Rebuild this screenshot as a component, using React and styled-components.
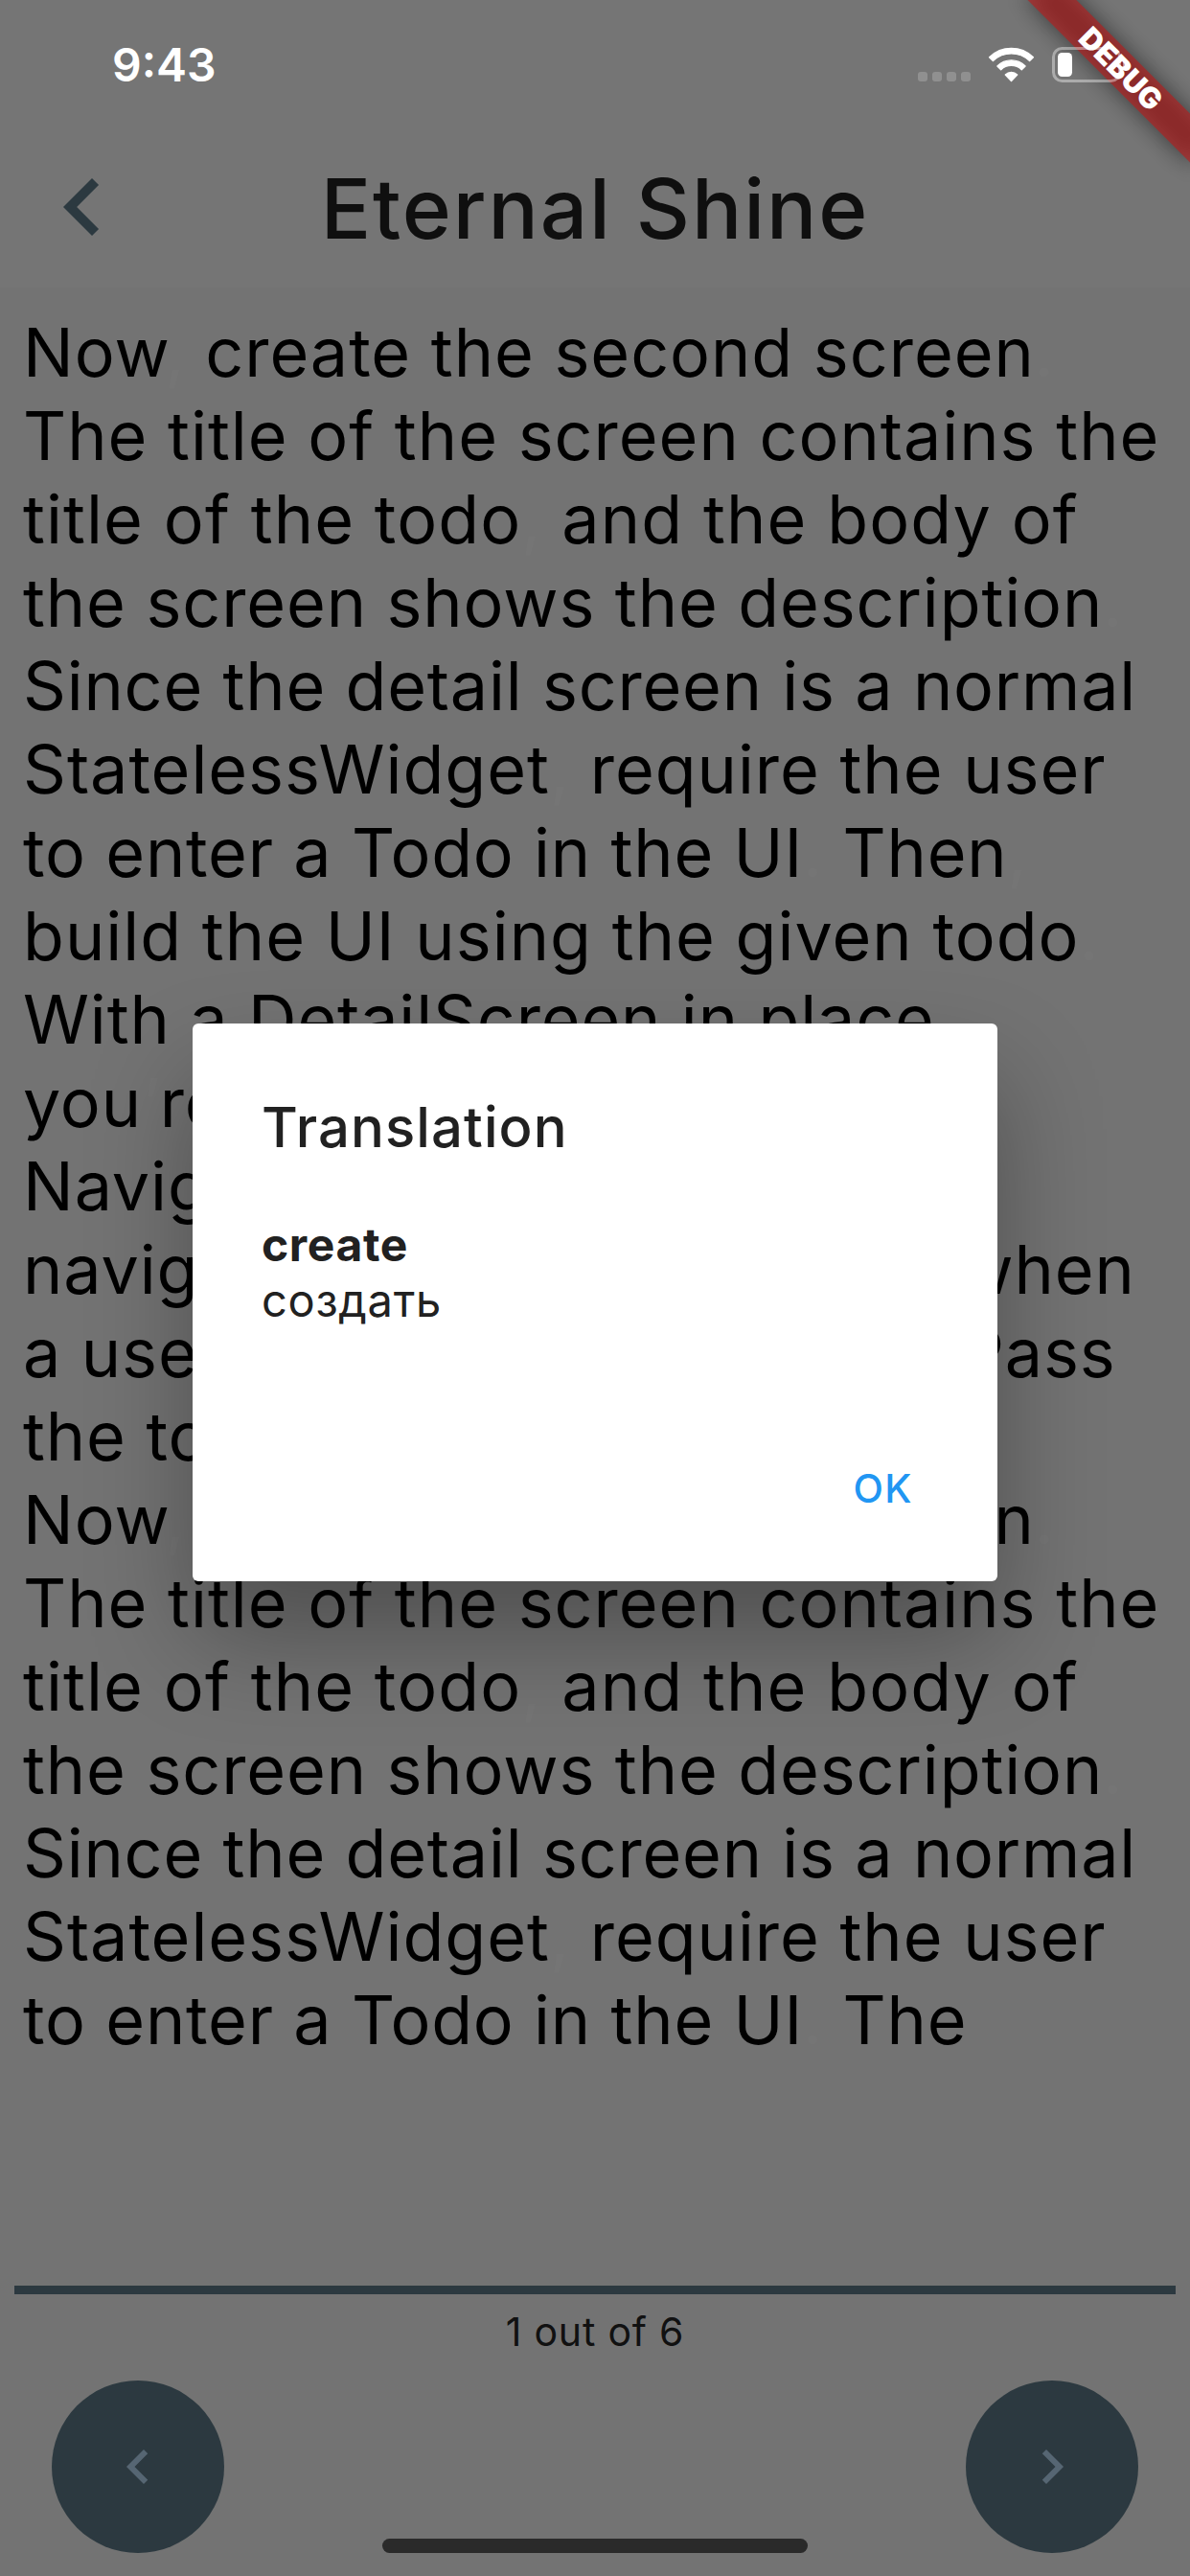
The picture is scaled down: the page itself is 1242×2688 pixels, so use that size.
import React from "react";
import styled, { createGlobalStyle } from "styled-components";

const GlobalStyle = createGlobalStyle`
  *, *::before, *::after {
    box-sizing: border-box;
  }
  html, body {
    margin: 0;
    padding: 0;
    background: #fafafa;
  }
  body {
    font-family: Inter, Roboto, "Liberation Sans", sans-serif;
  }
`;

const Screen = styled.div`
  position: relative;
  width: 1242px;
  height: 2688px;
  overflow: hidden;
  display: flex;
  flex-direction: column;
  background: #fafafa;
`;

/* ---------- app bar ---------- */

const AppBar = styled.header`
  flex: none;
  height: 300px;
  padding-top: 132px;
  display: grid;
  grid-template-columns: 172px 1fr 172px;
  align-items: center;
  background: #ffffff;
`;

const BackButton = styled.button`
  display: flex;
  align-items: center;
  margin: 0;
  padding: 0 0 0 26px;
  border: 0;
  background: none;
`;

const PageTitle = styled.h1`
  margin: 0;
  padding-top: 3px;
  font-size: 87px;
  line-height: 108px;
  font-weight: 500;
  letter-spacing: 1.9px;
  text-align: center;
  white-space: nowrap;
  color: rgba(0, 0, 0, 0.87);
`;

/* ---------- reading area ---------- */

const Reader = styled.main`
  flex: 1;
  min-height: 0;
  padding: 24px 0 0 24px;
`;

const Line = styled.p`
  margin: 0;
  font-size: 70px;
  line-height: 87px;
  letter-spacing: ${(p) => p.$tracking}px;
  white-space: pre;
  color: #000000;
`;

const Mark = styled.span`
  color: #ffffff;
`;

/* ---------- pager ---------- */

const Pager = styled.footer`
  flex: none;
  display: flex;
  flex-direction: column;
  padding: 0 15px 24px;
`;

const Rule = styled.div`
  height: 9px;
  background: #607d8b;
`;

const PageCount = styled.div`
  margin: 15px 0 27px;
  font-size: 41px;
  line-height: 48px;
  letter-spacing: 0.8px;
  text-align: center;
  color: rgba(0, 0, 0, 0.87);
`;

const PagerButtons = styled.div`
  display: flex;
  justify-content: space-between;
  padding: 0 39px;
`;

const RoundButton = styled.button`
  width: 180px;
  height: 180px;
  padding: 0;
  border: 0;
  border-radius: 50%;
  display: flex;
  align-items: center;
  justify-content: center;
  background: #607d8b;
`;

/* ---------- dialog ---------- */

const Barrier = styled.div`
  position: absolute;
  inset: 0;
  padding-top: 30px;
  display: flex;
  align-items: center;
  justify-content: center;
  background: rgba(0, 0, 0, 0.54);
`;

const Dialog = styled.section`
  width: 840px;
  height: 582px;
  padding: 72px 72px 43px;
  display: flex;
  flex-direction: column;
  border-radius: 6px;
  background: #ffffff;
  color: #212121;
  box-shadow: 0 58px 110px rgba(0, 0, 0, 0.31);
`;

const DialogTitle = styled.h2`
  margin: 0 0 58px;
  font-size: 58px;
  line-height: 72px;
  font-weight: 500;
  letter-spacing: 1.1px;
`;

const Entry = styled.div`
  line-height: 58px;
  font-size: ${(p) => (p.$source ? 48 : 47)}px;
  font-weight: ${(p) => (p.$source ? 700 : 400)};
  letter-spacing: ${(p) => (p.$source ? 0.6 : 0.7)}px;
`;

const Actions = styled.div`
  margin-top: auto;
  display: flex;
  justify-content: flex-end;
`;

const TextButton = styled.button`
  height: 108px;
  margin: 0;
  padding: 0 16px;
  border: 0;
  background: none;
  font-family: inherit;
  font-size: 41px;
  font-weight: 500;
  letter-spacing: 1.5px;
  color: #2196f3;
`;

/* ---------- system overlays ---------- */

const BannerCorner = styled.div`
  position: absolute;
  top: 0;
  right: 0;
  width: 260px;
  height: 260px;
  overflow: hidden;
`;

const Banner = styled.div`
  position: absolute;
  top: 54px;
  left: 68px;
  width: 240px;
  height: 36px;
  transform: rotate(45deg);

  &::before {
    content: "";
    position: absolute;
    inset: 0;
    background: rgba(0, 0, 0, 0.5);
    filter: blur(12px);
  }
`;

const BannerLabel = styled.div`
  position: relative;
  height: 36px;
  line-height: 36px;
  text-align: center;
  font-size: 31px;
  font-weight: 900;
  color: #ffffff;
  background: rgba(183, 28, 28, 0.63);
`;

const StatusBar = styled.div`
  position: absolute;
  inset: 0 0 auto 0;
  height: 135px;
  padding: 0 65px 0 117px;
  display: flex;
  align-items: center;
  justify-content: space-between;
`;

const Clock = styled.div`
  font-size: 48px;
  font-weight: 600;
  color: #ffffff;
`;

const StatusIcons = styled.div`
  display: flex;
  align-items: center;
`;

const SignalDots = styled.div`
  display: flex;
  gap: 5px;
  margin: 25px 18px 0 0;
`;

const Dot = styled.span`
  width: 10px;
  height: 10px;
  border-radius: 3px;
  background: rgba(255, 255, 255, 0.2);
`;

const WifiIcon = styled.svg`
  display: block;
  width: 49px;
  height: 37px;
  margin-right: 18px;
`;

const BatteryIcon = styled.svg`
  display: block;
  width: 79px;
  height: 37px;
`;

const HomeIndicator = styled.div`
  position: absolute;
  bottom: 24px;
  left: 50%;
  width: 444px;
  height: 15px;
  margin-left: -222px;
  border-radius: 8px;
  background: #2a2a2a;
`;

function Chevron({ direction, size, color }) {
  const points =
    direction === "left"
      ? "15.41 7.41 14 6 8 12 14 18 15.41 16.59 10.83 12"
      : "10 6 8.59 7.41 13.17 12 8.59 16.59 10 18 16 12";
  return (
    <svg width={size} height={size} viewBox="0 0 24 24" fill={color} aria-hidden="true">
      <polygon points={points} />
    </svg>
  );
}

/* Each entry is a line of the page and its tracking in pixels. */
const LINES = [
  ["Now, create the second screen.", 0.97],
  ["The title of the screen contains the", 1],
  ["title of the todo, and the body of", 1.1],
  ["the screen shows the description.", 0.9],
  ["Since the detail screen is a normal", 0.8],
  ["StatelessWidget, require the user", 0.98],
  ["to enter a Todo in the UI. Then,", 0.8],
  ["build the UI using the given todo.", 1.02],
  ["With a DetailScreen in place,", 0.87],
  ["you’re ready to perform the", 0.9],
  ["Navigation. In this example,", 0.9],
  ["navigate to the DetailScreen when", 0.9],
  ["a user taps a todo in the list. Pass", 0.9],
  ["the todo to the DetailScreen.", 0.9],
  ["Now, create the second screen.", 0.97],
  ["The title of the screen contains the", 1],
  ["title of the todo, and the body of", 1.1],
  ["the screen shows the description.", 0.9],
  ["Since the detail screen is a normal", 0.8],
  ["StatelessWidget, require the user", 0.98],
  ["to enter a Todo in the UI. The", 0.8],
];

/* Words are black, punctuation between them is white. */
function ReaderLine({ text, tracking }) {
  return (
    <Line $tracking={tracking}>
      {text
        .split(/([.,’])/)
        .map((part, i) => (i % 2 ? <Mark key={i}>{part}</Mark> : part))}
    </Line>
  );
}

export default function App() {
  return (
    <>
      <GlobalStyle />
      <Screen>
        <AppBar>
          <BackButton aria-label="Back">
            <Chevron direction="left" size={120} color="#607d8b" />
          </BackButton>
          <PageTitle>Eternal Shine</PageTitle>
        </AppBar>

        <Reader>
          {LINES.map(([text, tracking], i) => (
            <ReaderLine key={i} text={text} tracking={tracking} />
          ))}
        </Reader>

        <Pager>
          <Rule />
          <PageCount>1 out of 6</PageCount>
          <PagerButtons>
            <RoundButton aria-label="Previous page">
              <Chevron direction="left" size={72} color="#bbdefb" />
            </RoundButton>
            <RoundButton aria-label="Next page">
              <Chevron direction="right" size={72} color="#bbdefb" />
            </RoundButton>
          </PagerButtons>
        </Pager>

        <Barrier>
          <Dialog role="dialog">
            <DialogTitle>Translation</DialogTitle>
            <Entry $source>create</Entry>
            <Entry>создать</Entry>
            <Actions>
              <TextButton>OK</TextButton>
            </Actions>
          </Dialog>
        </Barrier>

        <BannerCorner>
          <Banner>
            <BannerLabel>DEBUG</BannerLabel>
          </Banner>
        </BannerCorner>

        <StatusBar>
          <Clock>9:43</Clock>
          <StatusIcons>
            <SignalDots>
              <Dot />
              <Dot />
              <Dot />
              <Dot />
            </SignalDots>
            <WifiIcon viewBox="0 0 49 37">
              <g fill="#fff" stroke="#fff" strokeWidth="1.4" strokeLinejoin="round">
                <path d="M1.6 10.8 A33 33 0 0 1 47.4 10.8 L43.6 14.6 A27.6 27.6 0 0 0 5.4 14.6 Z" />
                <path d="M9.9 19.9 A20.8 20.8 0 0 1 39.1 19.9 L35.3 23.7 A15.4 15.4 0 0 0 13.7 23.7 Z" />
                <path d="M18.3 28.9 A9 9 0 0 1 30.7 28.9 L24.5 35.4 Z" />
              </g>
            </WifiIcon>
            <BatteryIcon viewBox="0 0 79 37">
              <rect x="1.5" y="1.5" width="69" height="34" rx="9" fill="none" stroke="#fff" strokeOpacity="0.4" strokeWidth="3" />
              <path d="M74 13 A6 6 0 0 1 74 24 Z" fill="#fff" fillOpacity="0.45" />
              <rect x="6" y="6" width="15" height="25" rx="4.5" fill="#fff" />
            </BatteryIcon>
          </StatusIcons>
        </StatusBar>

        <HomeIndicator />
      </Screen>
    </>
  );
}
